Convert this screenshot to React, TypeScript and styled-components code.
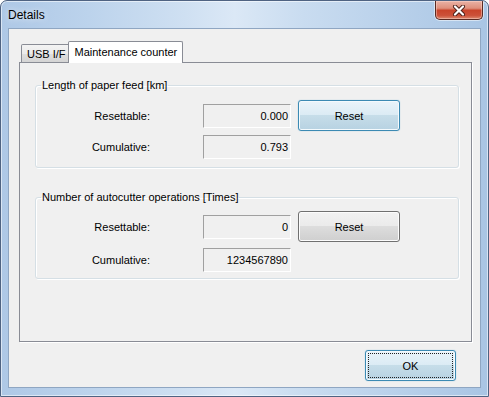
import styled, { createGlobalStyle, css } from "styled-components";

const GlobalStyle = createGlobalStyle`
  html, body {
    margin: 0;
    padding: 0;
    background: #ffffff;
  }
  * {
    box-sizing: border-box;
  }
`;

const Window = styled.div`
  width: 489px;
  height: 397px;
  display: flex;
  flex-direction: column;
  border: 1px solid #4f6382;
  border-radius: 7px 7px 0 0;
  background: linear-gradient(
    90deg,
    #aec8e6 0%,
    #bcd3ec 18%,
    #cfe0f2 38%,
    #dbe8f6 48%,
    #c9dcf0 62%,
    #b8d0ea 82%,
    #a9c5e4 100%
  );
  box-shadow: inset 0 0 0 1px rgba(255, 255, 255, 0.55);
  font-family: "Liberation Sans", Arial, sans-serif;
  font-size: 11px;
  color: #000;
  overflow: hidden;
`;

const TitleBar = styled.div`
  height: 27px;
  display: flex;
  align-items: flex-start;
  padding-left: 7px;
`;

const Title = styled.span`
  margin-top: 6px;
  font-size: 12px;
  line-height: 16px;
  color: #000;
  text-shadow: 0 0 6px rgba(255, 255, 255, 0.9);
`;

const CloseButton = styled.button`
  margin-left: auto;
  margin-right: 5px;
  width: 48px;
  height: 19px;
  padding: 0;
  display: flex;
  align-items: center;
  justify-content: center;
  border: 1px solid #5a2a22;
  border-top: none;
  border-radius: 0 0 5px 5px;
  background: linear-gradient(
    180deg,
    #eab2a5 0%,
    #df8f7c 40%,
    #c9442b 52%,
    #cc5139 80%,
    #dc8a70 100%
  );
  box-shadow: inset 0 0 0 1px rgba(255, 220, 210, 0.45),
    0 0 0 1px rgba(255, 255, 255, 0.5);
`;

const Client = styled.div`
  flex: 1;
  margin: 0 7px 8px 7px;
  border: 1px solid #8fa6c2;
  background: #f0f0f0;
  padding: 12px 8px 0 10px;
  display: flex;
  flex-direction: column;
`;

const TabStrip = styled.div`
  height: 21px;
  display: flex;
  align-items: flex-end;
  padding-left: 2px;
  position: relative;
  z-index: 1;
`;

const Tab = styled.div<{ $active?: boolean }>`
  border: 1px solid #898c95;
  border-bottom: none;
  border-radius: 2px 2px 0 0;
  line-height: 14px;
  white-space: nowrap;
  ${(p) =>
    p.$active
      ? css`
          height: 22px;
          margin-bottom: -1px;
          margin-left: -2px;
          padding: 3px 5px 0 6px;
          background: #ffffff;
        `
      : css`
          height: 18px;
          padding: 2px 3px 0 5px;
          background: linear-gradient(180deg, #f3f3f3 0%, #ebebeb 50%, #dfdfdf 51%, #d4d4d4 100%);
        `}
`;

const Panel = styled.div`
  flex: 1;
  border: 1px solid #898c95;
  background: #f0f0f0;
  box-shadow: 1px 1px 0 #ffffff;
  padding: 15px 12px 0 15px;
  display: flex;
  flex-direction: column;
`;

const Group = styled.fieldset<{ $padTop: number; $padBottom: number; $gap: number }>`
  margin: 0;
  min-inline-size: 0;
  border: 1px solid #d5dfe5;
  border-radius: 3px;
  box-shadow: inset 1px 1px 0 #ffffff, 1px 1px 0 #ffffff;
  padding: ${(p) => p.$padTop}px 0 ${(p) => p.$padBottom}px 0;
  display: flex;
  flex-direction: column;
  gap: ${(p) => p.$gap}px;
  & + & {
    margin-top: 22px;
  }
`;

const Legend = styled.legend`
  margin-left: 5px;
  padding: 0 1px;
  line-height: 14px;
  color: #000;
`;

const Row = styled.div`
  height: 31px;
  display: flex;
  align-items: center;
`;

const Label = styled.span`
  width: 114px;
  text-align: right;
`;

const ValueBox = styled.div`
  width: 88px;
  height: 24px;
  margin-left: 53px;
  display: flex;
  align-items: center;
  justify-content: flex-end;
  padding-right: 2px;
  background: #f0f0f0;
  border-top: 1px solid #a0a0a0;
  border-left: 1px solid #a0a0a0;
  border-right: 1px solid #ffffff;
  border-bottom: 1px solid #ffffff;
`;

const Button = styled.button<{ $variant: "normal" | "default" | "focused" }>`
  height: 31px;
  padding: 0;
  font-family: "Liberation Sans", Arial, sans-serif;
  font-size: 11px;
  color: #000;
  border-radius: 3px;
  ${(p) =>
    p.$variant === "normal"
      ? css`
          border: 1px solid #707070;
          background: linear-gradient(180deg, #f2f2f2 0%, #ebebeb 49%, #dddddd 50%, #cfcfcf 100%);
          box-shadow: inset 0 0 0 1px #fcfcfc;
        `
      : css`
          border: 1px solid #3c8ab3;
          background: linear-gradient(180deg, #eaf4fa 0%, #dbebf4 49%, #c6dde9 50%, #b7d2e2 100%);
          box-shadow: inset 0 0 0 1px #f4fafd, 0 0 1px #7ab8d8;
        `}
  ${(p) =>
    p.$variant === "focused" &&
    css`
      outline: 1px dotted #222;
      outline-offset: -4px;
    `}
`;

const ResetButton = styled(Button)`
  width: 102px;
  margin-left: 7px;
`;

const Footer = styled.div`
  height: 45px;
  padding: 8px 16px 0 0;
  display: flex;
  justify-content: flex-end;
  align-items: flex-start;
`;

const OkButton = styled(Button)`
  width: 91px;
`;

const CloseGlyph = () => (
  <svg width="14" height="11" viewBox="0 0 14 11">
    <path d="M3 1.5 L11 9.5 M11 1.5 L3 9.5" stroke="#4b1e17" strokeWidth="4" strokeLinecap="round" />
    <path d="M3 1.5 L11 9.5 M11 1.5 L3 9.5" stroke="#ffffff" strokeWidth="2.2" strokeLinecap="round" />
  </svg>
);

type Counter = {
  title: string;
  resettable: string;
  cumulative: string;
  padTop: number;
  padBottom: number;
  gap: number;
  resetVariant: "normal" | "default";
};

const counters: Counter[] = [
  {
    title: "Length of paper feed [km]",
    resettable: "0.000",
    cumulative: "0.793",
    padTop: 8,
    padBottom: 5,
    gap: 0,
    resetVariant: "default",
  },
  {
    title: "Number of autocutter operations [Times]",
    resettable: "0",
    cumulative: "1234567890",
    padTop: 7,
    padBottom: 3,
    gap: 2,
    resetVariant: "normal",
  },
];

export default function App() {
  return (
    <>
      <GlobalStyle />
      <Window>
        <TitleBar>
          <Title>Details</Title>
          <CloseButton aria-label="Close">
            <CloseGlyph />
          </CloseButton>
        </TitleBar>
        <Client>
          <TabStrip>
            <Tab>USB I/F</Tab>
            <Tab $active>Maintenance counter</Tab>
          </TabStrip>
          <Panel>
            {counters.map((c) => (
              <Group key={c.title} $padTop={c.padTop} $padBottom={c.padBottom} $gap={c.gap}>
                <Legend>{c.title}</Legend>
                <Row>
                  <Label>Resettable:</Label>
                  <ValueBox>{c.resettable}</ValueBox>
                  <ResetButton $variant={c.resetVariant}>Reset</ResetButton>
                </Row>
                <Row>
                  <Label>Cumulative:</Label>
                  <ValueBox>{c.cumulative}</ValueBox>
                </Row>
              </Group>
            ))}
          </Panel>
          <Footer>
            <OkButton $variant="focused">OK</OkButton>
          </Footer>
        </Client>
      </Window>
    </>
  );
}
